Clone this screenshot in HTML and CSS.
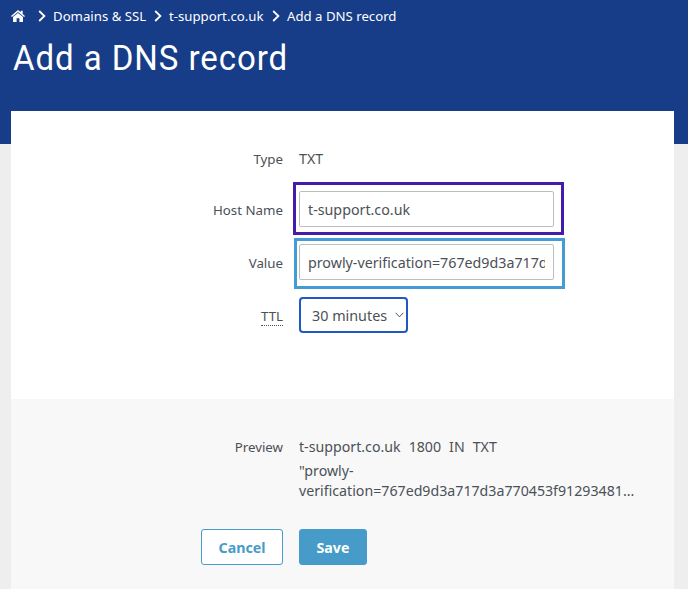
FILE: index.html
```html
<!DOCTYPE html>
<html lang="en">
<head>
<meta charset="utf-8">
<title>Add a DNS record</title>
<link rel="stylesheet" href="styles.css">
</head>
<body>
<header class="header">
  <nav class="crumbs">
    <svg class="home" viewBox="0 0 14 12"><path d="M7 2.9 12 7v4.4q0 .6-.6.6H8.4V8.2H5.6V12H2.6Q2 12 2 11.4V7z"/><path d="M7 0 9.7 2.3V.8h2v3.2L14 6l-.9 1L7 1.9.9 7 0 6z"/></svg>
    <svg class="sep" viewBox="0 0 8 12"><path d="M1.2 1 6.4 6 1.2 11"/></svg>
    <span class="crumb c1">Domains &amp; SSL</span>
    <svg class="sep" viewBox="0 0 8 12"><path d="M1.2 1 6.4 6 1.2 11"/></svg>
    <span class="crumb c2">t-support.co.uk</span>
    <svg class="sep" viewBox="0 0 8 12"><path d="M1.2 1 6.4 6 1.2 11"/></svg>
    <span class="crumb">Add a DNS record</span>
  </nav>
  <h1 class="title">Add a DNS record</h1>
</header>
<main class="card">
  <section class="form">
    <div class="row type"><span class="label">Type</span><span class="text">TXT</span></div>
    <div class="row"><label class="label" for="host">Host Name</label>
      <div class="field purple"><input id="host" class="input" value="t-support.co.uk"></div></div>
    <div class="row"><label class="label" for="value">Value</label>
      <div class="field blue"><input id="value" class="input" value="prowly-verification=767ed9d3a717d3a770453f91293481"></div></div>
    <div class="row"><span class="label"><span class="hint">TTL</span></span>
      <div class="select"><span>30 minutes</span><svg class="chev" viewBox="0 0 9 6"><path d="M.6.8 4.5 4.8 8.4.8"/></svg></div></div>
  </section>
  <section class="foot">
    <div class="row preview"><span class="label">Preview</span>
      <div class="text"><div class="record"><span>t-support.co.uk</span><span>1800</span><span>IN</span><span>TXT</span></div>
      <div class="data">"prowly-<br>verification=767ed9d3a717d3a770453f91293481...</div></div></div>
    <div class="actions"><button class="btn cancel">Cancel</button><button class="btn save">Save</button></div>
  </section>
</main>
</body>
</html>
```
FILE: styles.css
```css
* { box-sizing: border-box; }
body {
  margin: 0;
  height: 589px;
  overflow: hidden;
  background: #eeeeee;
  color: #4b5157;
  font-family: "Noto Sans", sans-serif;
  font-size: 14px;
}
.header {
  height: 144px;
  padding: 6px 11px 0;
  background: #173c88;
  color: #fff;
}
.crumbs { display: flex; align-items: center; height: 20px; font-size: 13.2px; white-space: nowrap; }
.home { width: 14px; height: 12px; margin-right: 13px; fill: #fff; }
.sep { width: 8px; height: 12px; margin-right: 7px; fill: none; stroke: #fff; stroke-width: 1.8; }
.crumb { line-height: 20px; }
.c1 { width: 101px; }
.c2 { width: 103px; }
.title {
  margin: 11px 0 0 2px;
  font: 400 35px/44px "Roboto", sans-serif;
  letter-spacing: 1px;
  white-space: nowrap;
  transform: scaleX(.943);
  transform-origin: left;
}
.card {
  width: 663px;
  height: 478px;
  margin: -33px 0 0 11px;
  background: #fff;
}
.form { height: 288px; padding-top: 37px; }
.row {
  display: grid;
  grid-template-columns: 272px 1fr;
  column-gap: 16px;
  align-items: center;
  height: 36px;
  margin-bottom: 17px;
}
.type { height: 20px; margin-bottom: 23px; }
.label { text-align: right; font-size: 13.3px; line-height: 20px; padding-top: 2px; }
.type .label { padding-top: 1px; }
.text { font-size: 14.2px; line-height: 20px; }
.field { position: relative; width: 255px; height: 36px; }
.field::after { content: ""; position: absolute; pointer-events: none; }
.purple::after { inset: -9px -10px -8px -6px; border: 3px solid #431ca9; }
.blue::after { inset: -6px -11px -9px -5px; border: 3px solid #439dd4; }
.input {
  display: block;
  width: 255px;
  height: 36px;
  padding: 0 8px;
  border: 1px solid #bdbdbd;
  border-radius: 2px;
  background: #fff;
  color: inherit;
  font: 14.25px "Noto Sans", sans-serif;
}
.hint { display: inline-block; line-height: 18px; border-bottom: 1px dotted #4b5157; }
.select {
  display: flex;
  align-items: center;
  justify-content: space-between;
  width: 109px;
  height: 36px;
  padding: 0 2px 0 11px;
  border: 2px solid #2058c4;
  border-radius: 4px;
  font-size: 14.35px;
  white-space: nowrap;
}
.chev { width: 9px; height: 6px; fill: none; stroke: #4b5157; stroke-width: 1; }
.foot { height: 190px; padding-top: 38px; background: #f8f8f8; }
.preview { height: 64px; margin-bottom: 28px; align-items: start; }
.preview .label { padding-top: 0; }
.record { display: flex; gap: 8px; line-height: 20px; }
.data { margin-top: 4px; line-height: 20px; white-space: nowrap; }
.actions { display: flex; gap: 16px; padding-left: 190px; }
.btn {
  height: 36px;
  padding: 0;
  border: 1px solid #469bc8;
  border-radius: 3px;
  font: 700 14.2px "Noto Sans", sans-serif;
}
.cancel { width: 82px; background: #fff; color: #469bc8; }
.save { width: 68px; background: #469bc8; color: #fff; }
```
